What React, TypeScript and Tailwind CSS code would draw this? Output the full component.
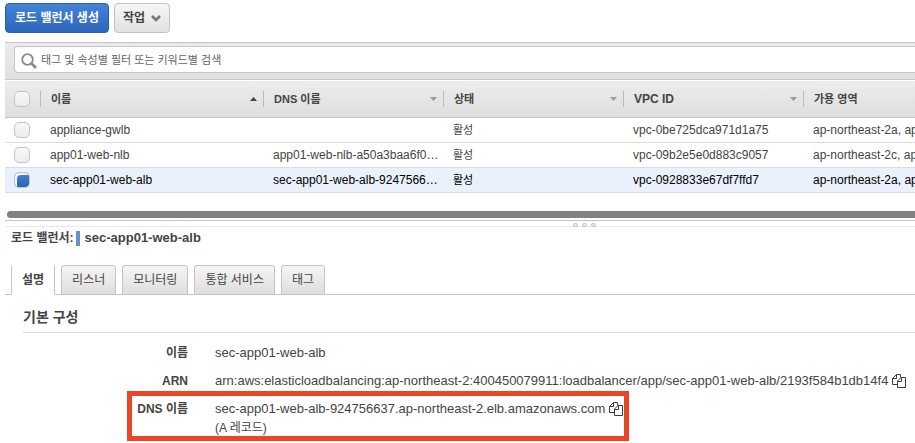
import { useState } from 'react';
import type { ReactNode } from 'react';

interface LoadBalancer {
  name: string;
  dns: string;
  state: string;
  vpc: string;
  zones: string;
}

const BALANCERS: LoadBalancer[] = [
  { name: 'appliance-gwlb',    dns: '',                           state: '활성', vpc: 'vpc-0be725dca971d1a75', zones: 'ap-northeast-2a, ap-northeast-2c' },
  { name: 'app01-web-nlb',     dns: 'app01-web-nlb-a50a3baa6f0…', state: '활성', vpc: 'vpc-09b2e5e0d883c9057', zones: 'ap-northeast-2c, ap-northeast-2a' },
  { name: 'sec-app01-web-alb', dns: 'sec-app01-web-alb-9247566…', state: '활성', vpc: 'vpc-0928833e67df7ffd7', zones: 'ap-northeast-2a, ap-northeast-2c' },
];

const COLUMNS = [
  { label: '이름',      width: 'w-[223px]', size: 'text-[11px]', sort: 'asc' },
  { label: 'DNS 이름',  width: 'w-[180px]', size: 'text-[11px]', sort: 'none' },
  { label: '상태',      width: 'w-[180px]', size: 'text-[11px]', sort: 'none' },
  { label: 'VPC ID',    width: 'w-[180px]', size: 'text-xs',     sort: 'none' },
  { label: '가용 영역', width: '',          size: 'text-[11px]', sort: '' },
];

const TABS = ['설명', '리스너', '모니터링', '통합 서비스', '태그'];

const CHECKBOX =
  'block appearance-none size-4 rounded-[5px] border border-[#c4c4c4] bg-linear-to-b from-[#f8f8f8] to-[#ececec] checked:from-[#4484d8] checked:to-[#2a62b8] checked:shadow-[inset_2px_2px_0_#f4f6fa]';

function CopyButton({ label }: { label: string }) {
  return (
    <button type="button" aria-label={label} className="shrink-0">
      <svg width="14" height="14" viewBox="0 0 14 14" fill="none" stroke="#3c3c3c" strokeWidth="1">
        <path d="M5.5 10.5h-5v-6l4-4h4.000v3M4.5.5v4h-4" />
        <path d="M9 3.5h4.500v10h-8v-6.500zM9.500 3.500v4h-4" fill="#fff" />
      </svg>
    </button>
  );
}

function DetailRow({ label, children }: { label: string; children: ReactNode }) {
  return (
    <div className="flex">
      <dt className="w-[183px] shrink-0 text-right text-xs leading-5 font-bold">{label}</dt>
      <dd className="ml-[27px] text-[13px] leading-5 whitespace-nowrap">{children}</dd>
    </div>
  );
}

export default function App() {
  const [selected, setSelected] = useState('sec-app01-web-alb');
  const [tab, setTab] = useState('설명');
  const [filter, setFilter] = useState('');

  return (
    <div className="overflow-hidden bg-white pt-[3px] pl-[5px] font-['Liberation_Sans','Noto_Sans_CJK_KR',sans-serif] text-[#444]">
      <div className="flex gap-[5px]">
        <button type="button" className="h-[30px] rounded border border-[#2a5fad] bg-linear-to-b from-[#4384d8] to-[#2d66ba] px-[9px] text-xs font-bold text-white">
          로드 밸런서 생성
        </button>
        <button type="button" className="flex h-[30px] items-center gap-1.5 rounded border border-[#c2c2c2] bg-linear-to-b from-[#f6f6f6] to-[#e2e2e2] px-2 text-xs font-bold">
          작업
          <svg width="10" height="7" viewBox="0 0 10 7" fill="none" stroke="#777" strokeWidth="2.6">
            <path d="M1 1l4 4 4-4" />
          </svg>
        </button>
      </div>

      <div className="mt-[9px] h-[38px] border-y border-[#c8c8c8] bg-linear-to-b from-[#ebebeb] to-[#e0e0e0] pt-[3px] pl-[9px]">
        <label className="flex h-[27px] items-center rounded-l border border-r-0 border-[#c6c6c6] bg-white pt-0.5 pl-1.5">
          <svg width="16" height="16" viewBox="0 0 16 16" fill="none" stroke="#8a8a8a">
            <circle cx="6.5" cy="6.5" r="5.3" strokeWidth="1.8" />
            <path d="M10.5 10.5l4.5 4.5" strokeWidth="2.8" />
          </svg>
          <input
            type="text"
            aria-label="필터"
            value={filter}
            onChange={(e) => setFilter(e.target.value)}
            placeholder="태그 및 속성별 필터 또는 키워드별 검색"
            className="ml-1 flex-1 text-[11px] outline-none placeholder:text-[#666]"
          />
        </label>
      </div>

      <table className="w-full table-fixed border-separate border-spacing-0 text-left">
        <thead>
          <tr className="h-[38px] bg-linear-to-b from-[#ededed] to-[#dedede]">
            <th className="w-[35px] border-t border-b border-t-white border-b-[#c4c4c4] p-0 pl-[9px]">
              <input type="checkbox" aria-label="모두 선택" className={CHECKBOX} />
            </th>
            {COLUMNS.map((c) => (
              <th key={c.label} className={`border-t border-b border-t-white border-b-[#c4c4c4] p-0 ${c.width} ${c.size}`}>
                <div className="flex h-4 items-center justify-between border-l border-[#bbb] pr-1.5 pl-2.5 whitespace-nowrap">
                  {c.label}
                  {c.sort === 'asc' && (
                    <svg width="7" height="4" viewBox="0 0 7 4"><path d="M0 4l3.5-4L7 4z" fill="#444" /></svg>
                  )}
                  {c.sort === 'none' && (
                    <svg width="7" height="4" viewBox="0 0 7 4"><path d="M0 0h7L3.5 4z" fill="#999" /></svg>
                  )}
                </div>
              </th>
            ))}
          </tr>
        </thead>
        <tbody className="text-xs">
          {BALANCERS.map((b) => {
            const cell = 'overflow-hidden border-b border-[#dcdcdc] p-0 pl-2.5 whitespace-nowrap first:pl-[9px]';
            return (
              <tr key={b.name} className={`h-[25px] ${b.name === selected ? 'bg-[#eaf1fc] text-black' : 'bg-white'}`}>
                <td className={cell}>
                  <input
                    type="checkbox"
                    aria-label={b.name}
                    checked={b.name === selected}
                    onChange={() => setSelected(b.name === selected ? '' : b.name)}
                    className={CHECKBOX}
                  />
                </td>
                <td className={cell}>{b.name}</td>
                <td className={cell}>{b.dns}</td>
                <td className={`${cell} text-[11px]`}>{b.state}</td>
                <td className={cell}>{b.vpc}</td>
                <td className={cell}>{b.zones}</td>
              </tr>
            );
          })}
        </tbody>
      </table>

      {/* scrollbar and split handle */}
      <div className="mt-[18px] ml-0.5 h-[7px] rounded-l-full bg-[#808080]" />
      <div className="relative mt-0.5 h-[7px] border-t border-b border-t-[#c4c4c4] border-b-[#e8e8e8]">
        <div className="absolute top-0.5 left-[568px] flex gap-1">
          <span className="h-1 w-[5px] rounded-sm border border-[#c4c4c4] bg-[#eee]" />
          <span className="h-1 w-[5px] rounded-sm border border-[#c4c4c4] bg-[#eee]" />
          <span className="h-1 w-[5px] rounded-sm border border-[#c4c4c4] bg-[#eee]" />
        </div>
      </div>

      <div className="mt-px flex h-5 items-center pl-1.5 font-bold">
        <span className="text-xs">로드 밸런서:</span>
        <span className="ml-0.5 h-[15px] w-1 bg-[#6293cf]" />
        <span className="ml-[5px] text-[13px]">sec-app01-web-alb</span>
      </div>

      <div role="tablist" className="mt-[17px] flex h-[30px]">
        <div className="w-1.5 border-b border-[#c4c4c4]" />
        {TABS.map((t) => (
          <div key={t} className="flex">
            <button
              type="button"
              role="tab"
              aria-selected={t === tab}
              onClick={() => setTab(t)}
              className={`border px-2.5 text-xs ${
                t === tab
                  ? 'border-x-[#c4c4c4] border-y-white bg-white font-bold'
                  : 'rounded-t-[3px] border-[#c4c4c4] bg-linear-to-b from-[#f5f5f5] to-[#dedede]'
              }`}
            >
              {t}
            </button>
            <div className="w-1.5 border-b border-[#c4c4c4]" />
          </div>
        ))}
        <div className="flex-1 border-b border-[#c4c4c4]" />
      </div>

      <section className="pt-3">
        <h2 className="ml-[18px] h-[26px] border-b border-[#dcdcdc] text-sm font-bold">기본 구성</h2>
        <dl className="mt-2.5 flex flex-col items-start gap-2 pb-[5px]">
          <DetailRow label="이름">sec-app01-web-alb</DetailRow>
          <DetailRow label="ARN">
            <span className="flex items-center gap-1">
              arn:aws:elasticloadbalancing:ap-northeast-2:400450079911:loadbalancer/app/sec-app01-web-alb/2193f584b1db14f4
              <CopyButton label="ARN 복사" />
            </span>
          </DetailRow>
          <div className="relative">
            <DetailRow label="DNS 이름">
              <span className="flex items-center gap-1">
                sec-app01-web-alb-924756637.ap-northeast-2.elb.amazonaws.com
                <CopyButton label="DNS 이름 복사" />
              </span>
              <span className="block text-xs leading-[18px]">(A 레코드)</span>
            </DetailRow>
            {/* red marker frame */}
            <span className="pointer-events-none absolute -top-2 -right-1.5 -bottom-1 left-[122px] border-[5px] border-[#ea4525]" />
          </div>
        </dl>
      </section>
    </div>
  );
}
